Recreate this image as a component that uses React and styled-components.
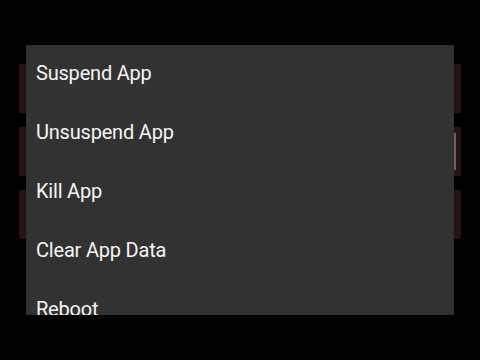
import React from "react";
import styled, { createGlobalStyle } from "styled-components";

const Global = createGlobalStyle`
  html, body { margin: 0; padding: 0; background: #000; }
  body { width: 480px; height: 360px; overflow: hidden; font-family: Roboto, "Noto Sans", sans-serif; }
`;

const Screen = styled.div`
  position: relative;
  width: 480px;
  height: 360px;
  background: #000;
  overflow: hidden;
`;

const Backdrop = styled.div`
  display: flex;
  flex-direction: column;
  gap: 14px;
  padding: 64px 19px 0 19px;
`;

const BgCard = styled.div`
  height: 49px;
  background: #261414;
  border-radius: 2px;
`;

const Menu = styled.div`
  position: absolute;
  left: 26px;
  top: 45px;
  width: 428px;
  height: 270px;
  background: #323232;
  overflow: hidden;
  display: flex;
  flex-direction: column;
`;

const Item = styled.div`
  flex: 0 0 59px;
  box-sizing: border-box;
  display: flex;
  align-items: center;
  padding: 0 0 4px 10px;
  color: #f5f5f5;
  font-size: 20px;
  letter-spacing: -0.2px;
`;

const Thumb = styled.div`
  position: absolute;
  left: 454px;
  top: 133px;
  width: 2px;
  height: 37px;
  background: #6a6262;
`;

const items = ["Suspend App", "Unsuspend App", "Kill App", "Clear App Data", "Reboot"];

export default function App() {
  return (
    <Screen>
      <Global />
      <Backdrop>
        <BgCard />
        <BgCard />
        <BgCard />
      </Backdrop>
      <Thumb />
      <Menu>
        {items.map((t) => (
          <Item key={t}>{t}</Item>
        ))}
      </Menu>
    </Screen>
  );
}
